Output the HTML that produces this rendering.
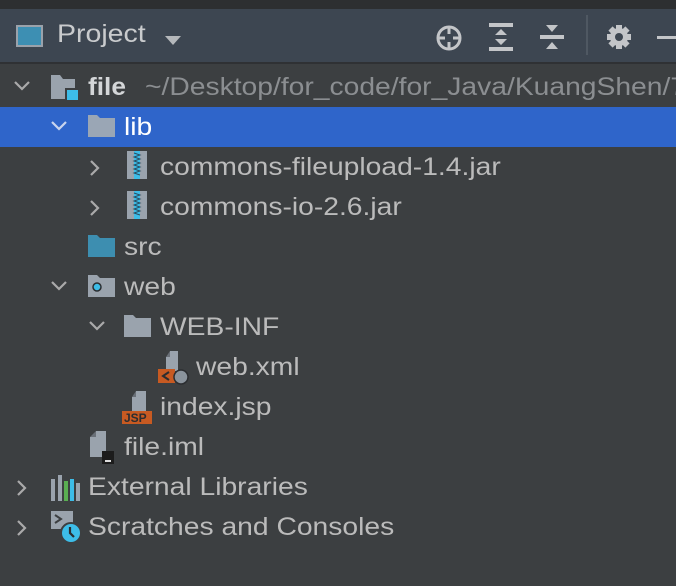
<!DOCTYPE html>
<html><head><style>
body{margin:0;width:676px;height:586px;background:#3c3f41;font-family:"Liberation Sans",sans-serif;overflow:hidden;position:relative}
.top{position:absolute;left:0;top:0;width:676px;height:9px;background:#2d2f31}
.hdr{position:absolute;left:0;top:9px;width:676px;height:53px;background:#3d4651;border-bottom:2px solid #2f3134}
.row{position:absolute;left:0;width:676px;height:40px}
.t{position:absolute;font-size:25px;color:#bbbbbb;top:6px;white-space:nowrap;transform:scaleX(1.13);transform-origin:0 0}
.sel{background:#2f65ca}
.sel .t{color:#fff}
.ch{position:absolute;top:12px}
svg{display:block}
.ic{position:absolute}
</style></head><body>
<div class="top"></div>
<div class="hdr">
 <div style="position:absolute;left:16px;top:16px;width:27px;height:22px;border:2px solid #9aa2ab;box-sizing:border-box;background:#3d8fb3"></div>
 <div style="position:absolute;left:57px;top:11px;font-size:25px;color:#c9cbcd;transform:scaleX(1.14);transform-origin:0 0">Project</div>
 <svg class="ic" style="left:163px;top:25px" width="20" height="12"><path d="M2 2h16L10 11z" fill="#b5b8bb"/></svg>
 <svg class="ic" style="left:434px;top:14px" width="30" height="30"><circle cx="15" cy="15" r="11" fill="none" stroke="#c3c5c8" stroke-width="3"/><path d="M15 3v8M15 19v8M3 15h8M19 15h8" stroke="#c3c5c8" stroke-width="3"/></svg>
 <svg class="ic" style="left:487px;top:13px" width="28" height="30"><rect x="2" y="1" width="24" height="4" fill="#c3c5c8"/><rect x="2" y="25" width="24" height="4" fill="#c3c5c8"/><path d="M8 13l6-6 6 6zM8 17l6 6 6-6z" fill="#c3c5c8"/></svg>
 <svg class="ic" style="left:538px;top:13px" width="28" height="30"><rect x="2" y="13" width="24" height="4" fill="#c3c5c8"/><path d="M8 3l6 7 6-7zM8 27l6-7 6 7z" fill="#c3c5c8"/></svg>
 <div style="position:absolute;left:586px;top:6px;width:2px;height:40px;background:#4f5862"></div>
 <svg class="ic" style="left:605px;top:14px" width="28" height="28"><g fill="#c3c5c8"><circle cx="14" cy="14" r="9"/><rect x="11" y="2" width="6" height="24"/><rect x="2" y="11" width="24" height="6"/><rect x="11" y="2" width="6" height="24" transform="rotate(45 14 14)"/><rect x="11" y="2" width="6" height="24" transform="rotate(-45 14 14)"/></g><circle cx="14" cy="14" r="4" fill="#3d4651"/></svg>
 <div style="position:absolute;left:657px;top:27px;width:19px;height:3px;background:#c3c5c8"></div>
</div>

<div class="row" style="top:67px">
 <svg class="ch" style="left:13px" width="18" height="14"><path d="M2 3l7 7 7-7" fill="none" stroke="#aaa" stroke-width="2.2"/></svg>
 <svg class="ic" style="left:50px;top:6px" width="32" height="30"><path d="M1 2h9l3 4h12v20H1z" fill="#9aa3ad"/><rect x="16" y="16" width="13" height="12" fill="#3dbde8" stroke="#3c3f41" stroke-width="2"/></svg>
 <div class="t" style="left:88px;font-weight:bold;color:#d4d6d8;transform:scaleX(1.05)">file</div>
 <div class="t" style="left:145px;color:#8b8e91">~/Desktop/for_code/for_Java/KuangShen/7</div>
</div>
<div class="row sel" style="top:107px">
 <svg class="ch" style="left:50px" width="18" height="14"><path d="M2 3l7 7 7-7" fill="none" stroke="#c8d4ee" stroke-width="2.2"/></svg>
 <svg class="ic" style="left:87px;top:7px" width="30" height="24"><path d="M1 1h9l3 3h15v19H1z" fill="#9aa6b5"/></svg>
 <div class="t" style="left:124px">lib</div>
</div>
<div class="row" style="top:147px">
 <svg class="ch" style="left:88px" width="14" height="18"><path d="M3 2l7 7-7 7" fill="none" stroke="#aaa" stroke-width="2.2"/></svg>
 <svg class="ic" style="left:127px;top:4px" width="20" height="28"><rect x="0" y="0" width="20" height="28" fill="#9aa3ad"/><rect x="7" y="0" width="6" height="28" fill="#3dbde8"/><path d="M7 2l6 2-6 2 6 2-6 2 6 2-6 2 6 2-6 2 6 2-6 2 6 2" stroke="#2a4d60" stroke-width="1" fill="none"/></svg>
 <div class="t" style="left:160px">commons-fileupload-1.4.jar</div>
</div>
<div class="row" style="top:187px">
 <svg class="ch" style="left:88px" width="14" height="18"><path d="M3 2l7 7-7 7" fill="none" stroke="#aaa" stroke-width="2.2"/></svg>
 <svg class="ic" style="left:127px;top:4px" width="20" height="28"><rect x="0" y="0" width="20" height="28" fill="#9aa3ad"/><rect x="7" y="0" width="6" height="28" fill="#3dbde8"/><path d="M7 2l6 2-6 2 6 2-6 2 6 2-6 2 6 2-6 2 6 2-6 2 6 2" stroke="#2a4d60" stroke-width="1" fill="none"/></svg>
 <div class="t" style="left:160px">commons-io-2.6.jar</div>
</div>
<div class="row" style="top:227px">
 <svg class="ic" style="left:87px;top:7px" width="30" height="24"><path d="M1 1h9l3 3h15v19H1z" fill="#3d8eb0"/></svg>
 <div class="t" style="left:124px">src</div>
</div>
<div class="row" style="top:267px">
 <svg class="ch" style="left:50px" width="18" height="14"><path d="M2 3l7 7 7-7" fill="none" stroke="#aaa" stroke-width="2.2"/></svg>
 <svg class="ic" style="left:87px;top:7px" width="30" height="24"><path d="M1 1h9l3 3h15v19H1z" fill="#9aa3ad"/><circle cx="10" cy="13" r="4" fill="#3dbde8" stroke="#2b2d30" stroke-width="1.5"/></svg>
 <div class="t" style="left:124px">web</div>
</div>
<div class="row" style="top:307px">
 <svg class="ch" style="left:88px" width="18" height="14"><path d="M2 3l7 7 7-7" fill="none" stroke="#aaa" stroke-width="2.2"/></svg>
 <svg class="ic" style="left:123px;top:7px" width="30" height="24"><path d="M1 1h9l3 3h15v19H1z" fill="#9aa3ad"/></svg>
 <div class="t" style="left:160px">WEB-INF</div>
</div>
<div class="row" style="top:347px">
 <svg class="ic" style="left:158px;top:4px" width="32" height="34"><path d="M12 0h8v20H8V6h4z" fill="#9aa3ad"/><path d="M12 0v6H8z" fill="#6a7078"/><rect x="0" y="18" width="17" height="14" fill="#c75a22"/><path d="M11 21l-6 4 6 4" stroke="#2b2d30" stroke-width="2" fill="none"/><circle cx="23" cy="26" r="7" fill="#8a939c" stroke="#2b2d30" stroke-width="1.5"/></svg>
 <div class="t" style="left:196px">web.xml</div>
</div>
<div class="row" style="top:387px">
 <svg class="ic" style="left:122px;top:4px" width="32" height="34"><path d="M14 0h10v22H10V6h4z" fill="#9aa3ad"/><path d="M14 0v6h-4z" fill="#6a7078"/><rect x="0" y="20" width="30" height="13" fill="#c75a22"/><text x="2" y="31" font-size="12" font-family="Liberation Sans" font-weight="bold" fill="#2b2d30">JSP</text></svg>
 <div class="t" style="left:160px">index.jsp</div>
</div>
<div class="row" style="top:427px">
 <svg class="ic" style="left:88px;top:4px" width="30" height="34"><path d="M8 0h10v26H2V6h6z" fill="#9aa3ad"/><path d="M8 0v6H2z" fill="#6a7078"/><rect x="14" y="20" width="12" height="13" fill="#1c1c1c"/><rect x="17" y="29" width="6" height="2" fill="#ddd"/></svg>
 <div class="t" style="left:124px">file.iml</div>
</div>
<div class="row" style="top:467px">
 <svg class="ch" style="left:15px" width="14" height="18"><path d="M3 2l7 7-7 7" fill="none" stroke="#aaa" stroke-width="2.2"/></svg>
 <svg class="ic" style="left:50px;top:8px" width="30" height="26"><rect x="1" y="4" width="4" height="22" fill="#9aa3ad"/><rect x="8" y="0" width="4" height="26" fill="#9aa3ad"/><rect x="14" y="6" width="4" height="20" fill="#5aae52"/><rect x="20" y="4" width="4" height="22" fill="#3dbde8"/><rect x="26" y="8" width="4" height="18" fill="#9aa3ad"/></svg>
 <div class="t" style="left:88px">External Libraries</div>
</div>
<div class="row" style="top:507px">
 <svg class="ch" style="left:15px" width="14" height="18"><path d="M3 2l7 7-7 7" fill="none" stroke="#aaa" stroke-width="2.2"/></svg>
 <svg class="ic" style="left:50px;top:4px" width="34" height="34"><rect x="1" y="0" width="22" height="18" fill="#9aa3ad"/><path d="M5 4l6 4-6 4" stroke="#3c3f41" stroke-width="2" fill="none"/><circle cx="21" cy="22" r="10" fill="#3dbde8" stroke="#3c3f41" stroke-width="2"/><path d="M20 16v6l4 4" stroke="#2b2d30" stroke-width="2.2" fill="none"/></svg>
 <div class="t" style="left:88px">Scratches and Consoles</div>
</div>
</body></html>
